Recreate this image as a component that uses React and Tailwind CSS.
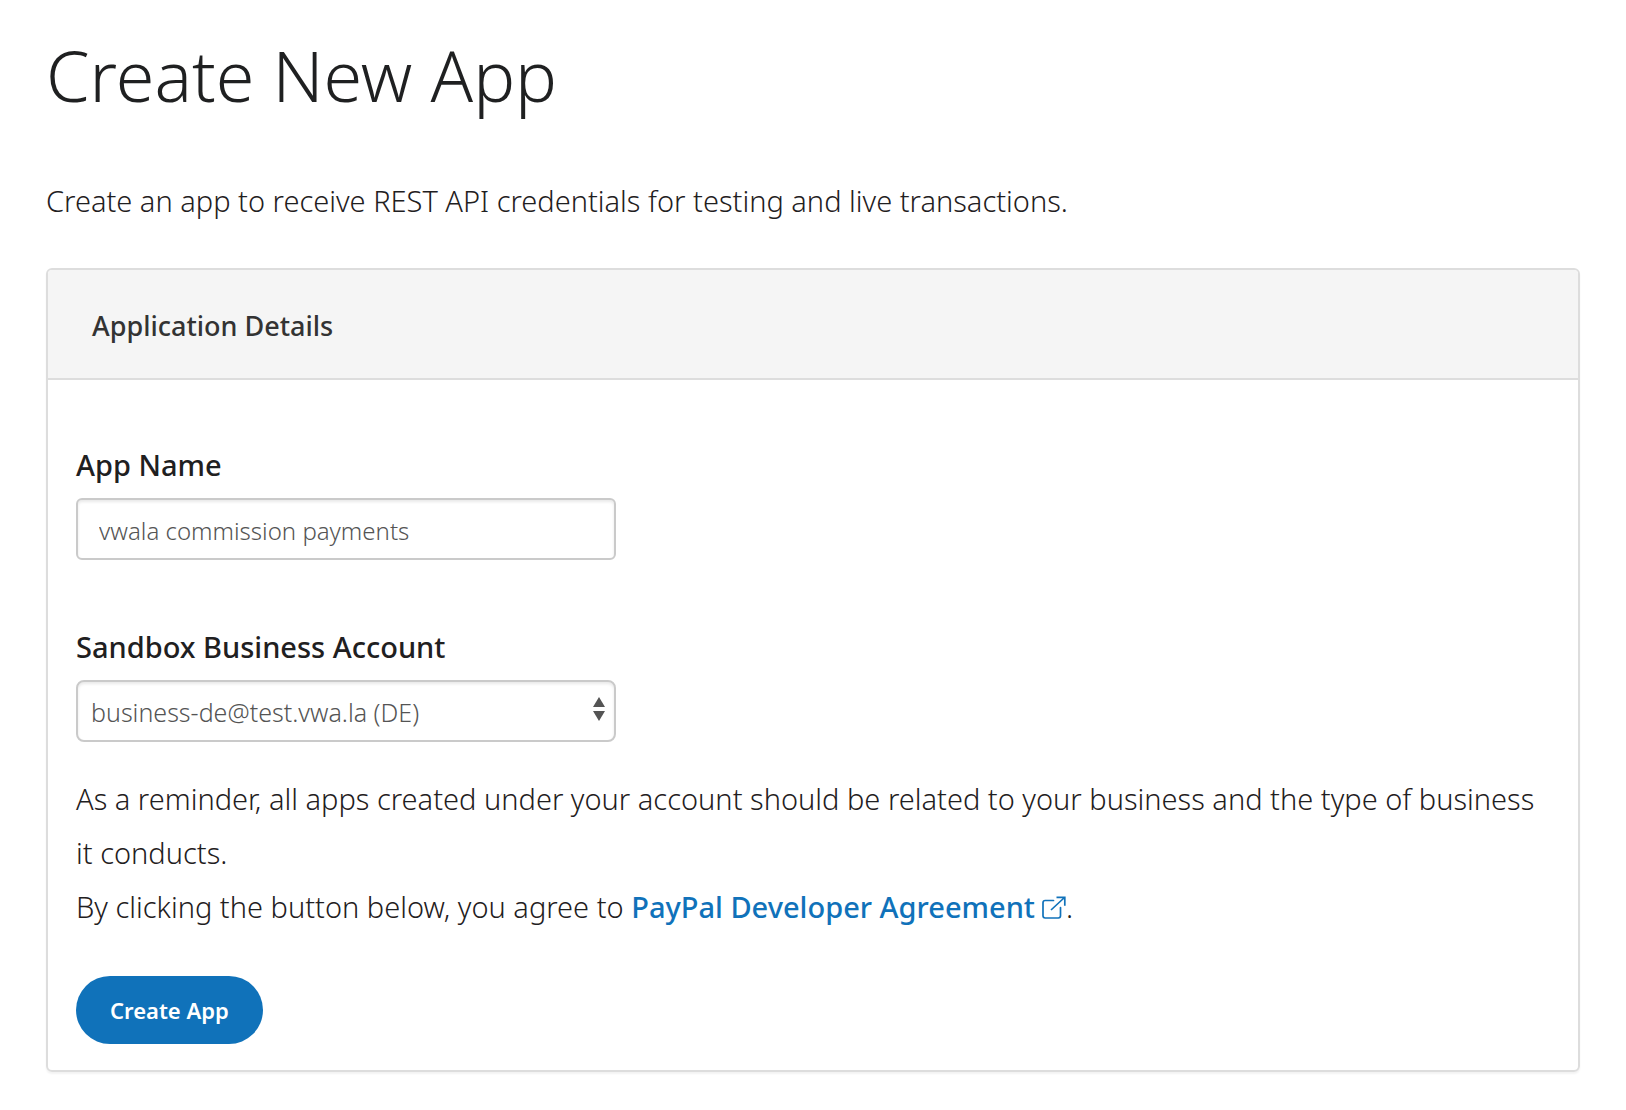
import React from 'react';

function ExternalLinkIcon() {
  return (
    <svg
      className="ml-[7px] inline-block h-6 w-6 align-[-2px]"
      viewBox="0 0 24 24"
      fill="none"
      stroke="currentColor"
      strokeWidth="1.7"
      aria-hidden="true"
    >
      <path d="M11.5 4.5H3.2Q1 4.5 1 6.7V19.8Q1 22 3.2 22H16.3Q18.5 22 18.5 19.8V11.5" strokeLinecap="round" />
      <path d="M9 14L22.5 1.5M14.5 1.3H22.8V9.8" />
    </svg>
  );
}

function SortArrows() {
  return (
    <svg
      className="pointer-events-none absolute right-[11px] top-[17px] h-6 w-3"
      viewBox="0 0 12 24"
      fill="#545454"
      aria-hidden="true"
    >
      <path d="M6 0L12 10H0Z" />
      <path d="M0 14H12L6 24Z" />
    </svg>
  );
}

const labelClass = 'block text-[29px] leading-10 font-medium';
const fieldClass =
  'block h-[62px] w-full border-2 border-[#cacaca] bg-white font-light text-[#545454] shadow-[inset_0_2px_3px_rgba(0,0,0,0.09)]';

export default function App() {
  return (
    <main className="bg-white px-[46px] pt-[35px] pb-[38px] font-['Noto_Sans',sans-serif] text-[#1f2021]">
      <h1 className="text-[70px] leading-[80px] font-light">Create New App</h1>
      <p className="mt-[59px] text-[29px] leading-[54px] font-light">
        Create an app to receive REST API credentials for testing and live transactions.
      </p>

      <section className="mt-10 rounded-[6px] border-2 border-[#dddddd] shadow-[0_2px_2px_rgba(0,0,0,0.05)]">
        <header className="rounded-t-[4px] border-b-2 border-[#dddddd] bg-[#f5f5f5] px-[44px] pt-9 pb-8">
          <h2 className="text-[27px] leading-10 font-medium text-[#333333]">Application Details</h2>
        </header>

        <form className="px-[28px] pt-[65px] pb-[26px]" onSubmit={(e) => e.preventDefault()}>
          <div className="max-w-[540px]">
            <label htmlFor="app-name" className={labelClass}>App Name</label>
            <div className="mt-[13px]">
              <input
                id="app-name"
                type="text"
                defaultValue="vwala commission payments"
                className={`${fieldClass} rounded-[6px] px-[21px] pt-[2px] text-[24px]`}
              />
            </div>
          </div>

          <div className="mt-[67px] max-w-[540px]">
            <label htmlFor="account" className={labelClass}>Sandbox Business Account</label>
            <div className="relative mt-[13px]">
              <select
                id="account"
                className={`${fieldClass} appearance-none rounded-[8px] pt-1 pr-10 pl-[13px] text-[25px]`}
              >
                <option>business-de@test.vwa.la (DE)</option>
              </select>
              <SortArrows />
            </div>
          </div>

          <div className="mt-[30px] text-[29px] leading-[54px] font-light">
            <p>
              As a reminder, all apps created under your account should be related to your business and the
              type of business it conducts.
            </p>
            <p>
              By clicking the button below, you agree to{' '}
              <a href="#agreement" className="font-medium text-[#1072ba]">
                PayPal Developer Agreement
                <ExternalLinkIcon />
              </a>
              .
            </p>
          </div>

          <button
            type="submit"
            className="mt-[42px] block h-[68px] rounded-full bg-[#1072ba] px-[34px] pt-px text-[22px] font-semibold text-white"
          >
            Create App
          </button>
        </form>
      </section>
    </main>
  );
}
